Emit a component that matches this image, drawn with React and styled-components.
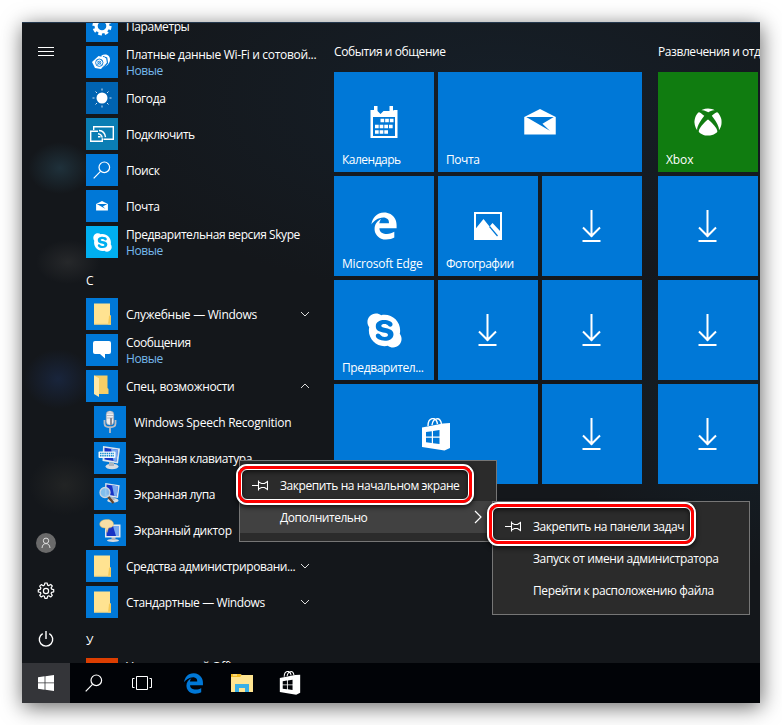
import React from 'react';
import styled, { createGlobalStyle, css } from 'styled-components';
import { FaSkype, FaXbox, FaEdgeLegacy } from 'react-icons/fa6';

const colors = {
    accent: '#0078d7',
    weather: '#0063b1',
    connect: '#0a7eb4',
    skype: '#00aff0',
    office: '#dc3e01',
    xbox: '#107c10',
    link: '#76b9ed',
    menu: '#2b2b2b',
    menuHover: '#414141',
    menuBorder: '#767676',
    marker: '#f00',
};

const GlobalStyle = createGlobalStyle`
    * {
        box-sizing: border-box;
    }

    body {
        margin: 0;
        background: #fff;
        color: #fff;
        font: 12px/16px "Open Sans", "Noto Sans", sans-serif;
        overflow: hidden;
    }

    svg {
        display: block;
        flex: none;
    }
`;

const Page = styled.div`
    height: 725px;
    padding: 22px;
`;

const Desktop = styled.div`
    position: relative;
    display: flex;
    flex-direction: column;
    width: 738px;
    height: 681px;
    background: #14181c;
    box-shadow: 1px 4px 20px rgba(0, 0, 0, 0.6);
`;

const StartMenu = styled.div`
    display: flex;
    height: 641px;
    overflow: hidden;
    border-top: 1px solid #24384e;
    background:
        radial-gradient(ellipse 32px 26px at 38px 145px, rgba(38, 66, 80, 0.6), transparent),
        radial-gradient(ellipse 32px 22px at 46px 239px, rgba(65, 65, 65, 0.4), transparent),
        radial-gradient(ellipse 34px 30px at 36px 356px, rgba(28, 46, 82, 0.6), transparent),
        radial-gradient(ellipse 36px 30px at 43px 462px, rgba(55, 55, 50, 0.4), transparent),
        radial-gradient(ellipse 200px 160px at 100% 60%, rgba(21, 38, 50, 0.6), transparent),
        radial-gradient(ellipse 420px 200px at 65% 12%, rgba(22, 32, 42, 0.9), transparent),
        #14171b;
`;

const Rail = styled.div`
    display: flex;
    flex-direction: column;
    align-items: center;
    width: 48px;
    padding: 24px 0 15px;
`;

const RailBottom = styled.div`
    display: flex;
    flex-direction: column;
    align-items: center;
    gap: 30px;
    margin-top: auto;
`;

const Avatar = styled.div`
    display: flex;
    align-items: center;
    justify-content: center;
    width: 20px;
    height: 20px;
    margin-bottom: -1px;
    border-radius: 50%;
    background: #6a6a6a;
`;

const AppList = styled.div`
    display: flex;
    flex-direction: column;
    gap: 4px;
    width: 264px;
    margin-top: -13px;
    padding-left: 16px;
`;

const AppRow = styled.div`
    display: flex;
    flex: none;
    align-items: center;
    width: 232px;
    height: 32px;
    margin-left: ${props => (props.$nested ? 8 : 0)}px;
`;

const AppIcon = styled.div`
    display: flex;
    flex: none;
    align-items: center;
    justify-content: center;
    width: 32px;
    height: 32px;
    margin-right: 8px;
    background: ${props => props.$color || colors.accent};
`;

const AppText = styled.div`
    padding-top: 1px;
    white-space: nowrap;
`;

const Text = styled.div`
    letter-spacing: ${props => props.$track || -0.42}px;
    white-space: nowrap;
`;

const NewLabel = styled(Text)`
    color: ${colors.link};
`;

const Letter = styled.div`
    flex: none;
    height: 32px;
    padding-top: 11px;
`;

const ChevronBox = styled.div`
    margin-left: auto;
    padding-right: 8px;
`;

const Groups = styled.div`
    display: flex;
    gap: 16px;
    width: 426px;
    overflow: hidden;
`;

const Group = styled.div`
    flex: none;
    padding-top: 21px;
`;

const GroupTitle = styled(Text)`
    height: 28px;
`;

const Tiles = styled.div`
    display: grid;
    grid-template-columns: repeat(${props => props.$columns}, 100px);
    grid-auto-rows: 100px;
    gap: 4px;
`;

const TileBox = styled.div`
    display: flex;
    flex-direction: column;
    align-items: center;
    height: 100px;
    background: ${props => props.$color || colors.accent};
    ${props => props.$wide && css`
        grid-column: span 2;
    `}
`;

const TileArt = styled.div`
    display: flex;
    flex: 1;
    align-items: center;
    padding-top: 20px;
`;

const TileLabel = styled(Text)`
    align-self: stretch;
    height: 20px;
    padding-left: 8px;
`;

const TaskBar = styled.div`
    display: flex;
    height: 40px;
    background: #010307;
`;

const TaskButton = styled.div`
    display: flex;
    align-items: center;
    justify-content: center;
    width: ${props => props.$width || 48}px;
    background: ${props => (props.$active ? '#343539' : 'transparent')};
`;

const Menu = styled.div`
    position: absolute;
    left: ${props => props.$left}px;
    top: ${props => props.$top}px;
    width: 258px;
    padding: 8px 0;
    border: 1px solid ${colors.menuBorder};
    background: ${colors.menu};
`;

const MenuItem = styled.div`
    display: flex;
    align-items: center;
    height: 32px;
    padding-right: 14px;
    background: ${props => (props.$hover ? colors.menuHover : 'transparent')};
`;

const MenuIcon = styled.div`
    width: 40px;
    padding-left: 12px;
`;

const MenuText = styled(Text)`
    padding-top: 2px;
`;

const MenuArrow = styled.div`
    margin-left: auto;
`;

const Marker = styled.div`
    position: absolute;
    left: ${props => props.$left}px;
    top: ${props => props.$top}px;
    width: ${props => props.$width}px;
    height: ${props => props.$height}px;
    border: 2px solid #fff;
    border-radius: 11px;
    box-shadow: 0 2px 5px rgba(0, 0, 0, 0.7);

    &::before {
        content: '';
        position: absolute;
        inset: 0;
        border: 3px solid ${colors.marker};
        border-radius: 9px;
    }

    &::after {
        content: '';
        position: absolute;
        inset: 3px;
        border: 1px solid #fff;
        border-radius: 6px;
        box-shadow: inset 0 2px 4px rgba(0, 0, 0, 0.6);
    }
`;

const HamburgerIcon = () => (
    <svg width="16" height="10" stroke="#fff">
        <path d="M0 .5h16M0 4.5h16M0 8.5h16" />
    </svg>
);

const GearIcon = () => (
    <svg width="28" height="28" viewBox="0 0 28 28" fill="none" stroke="#fff">
        <circle cx="14" cy="14" r="7.8" strokeWidth="3.6" strokeDasharray="3.5 2.626" />
        <circle cx="14" cy="14" r="5.9" strokeWidth="3.2" />
    </svg>
);

const CogIcon = () => (
    <svg width="18" height="18" viewBox="0 0 18 18" fill="none" stroke="#fff" strokeWidth="1.2" strokeLinejoin="round">
        <path d="M7.4 3.1 7.9 1h2.2l.5 2.1 1.2.5 1.9-1.2 1.6 1.6-1.2 1.9.5 1.2 2.1.5v2.2l-2.1.5-.5 1.2 1.2 1.9-1.6 1.6-1.9-1.2-1.2.5-.5 2.1H7.9l-.5-2.1-1.2-.5-1.9 1.2-1.6-1.6 1.2-1.9-.5-1.2L1.3 10V7.8l2.1-.5.5-1.2-1.2-1.9 1.6-1.6 1.9 1.2z" />
        <circle cx="9" cy="9" r="2.6" />
    </svg>
);

const PowerIcon = () => (
    <svg width="18" height="18" viewBox="0 0 18 18" fill="none" stroke="#fff" strokeWidth="1.4">
        <path d="M5.7 3.6a6.7 6.7 0 1 0 6.6 0M9 1v8" />
    </svg>
);

const UserIcon = () => (
    <svg width="10" height="12" viewBox="0 0 10 12" fill="none" stroke="#ddd">
        <circle cx="5" cy="3.8" r="2.7" />
        <path d="M1 11c.3-3 1.8-4.4 4-4.4S8.700 8 9 11" />
    </svg>
);

const DataIcon = () => (
    <svg width="20" height="16" viewBox="0 0 20 16">
        <path d="M9 2c4-3 9-1 9 3.500 0 3.500-2.500 6-7 8.500l2.500-6z" fill="#fff" />
        <path d="m11 2.500 3.700 1.500.8 5L10.500 15" fill="none" stroke={colors.accent} strokeWidth="1.200" />
        <path d="M0 8 6.500 2 13 3.500l1 5.500-5 6-6-1z" fill="#fff" />
        <circle cx="7.300" cy="8.700" r="3.700" fill="none" stroke={colors.accent} strokeWidth=".9" />
        <circle cx="7.300" cy="8.700" r="1.500" fill="none" stroke={colors.accent} strokeWidth=".8" />
        <path d="m4.800 6.200 5 5M9.800 6.200l-5 5" stroke={colors.accent} strokeWidth=".6" />
    </svg>
);

const SunIcon = () => (
    <svg width="20" height="20" viewBox="0 0 20 20" stroke="#cfe2f3">
        <circle cx="10" cy="10" r="5.500" fill="#fff" stroke="none" />
        <path d="M10 .5v2M10 17.500v2M.5 10h2M17.500 10h2M3.500 3.500l1.500 1.500M15 15l1.500 1.500M3.500 16.500 5 15M15 5l1.500-1.500" />
    </svg>
);

const ConnectIcon = () => (
    <svg width="26" height="20" viewBox="0 0 26 20" fill="none" stroke="#fff" strokeWidth="1.4">
        <path d="M4.700 6V2.700H24.300V15.300H14.500M9 7.300H1.700v10h11.600v-3" />
        <path d="M9 12.700h2.500M9 9.700c2.500.3 3.800 1.500 4.200 4M10 6.500c3.500.2 6 2.500 6.500 6.700" />
    </svg>
);

const SearchIcon = () => (
    <svg width="18" height="18" viewBox="0 0 18 18" fill="none" stroke="#fff" strokeWidth="1.2">
        <circle cx="11.300" cy="6.300" r="5.300" />
        <path d="M7.500 10.300.7 17.300" />
    </svg>
);

const MailIcon = ({ width = 32 }) => (
    <svg width={width} height={width * 0.8} viewBox="0 0 32 26">
        <path d="M0 8 16 0l16 8v18H0z" fill="#fff" />
        <path d="M2 8h28L18.500 15l7.500 7z" fill={colors.accent} />
    </svg>
);

const FolderIcon = () => (
    <svg width="18" height="22" viewBox="0 0 18 22">
        <path d="M1 .5h16V12l1 1v8.500H1z" fill="#ffe391" />
        <path d="M16 13.500 17 12l1 1.500v8h-3z" fill="#f5c957" />
        <path d="M1 20.500h17v1H1z" fill="#f7d680" />
    </svg>
);

const OpenFolderIcon = () => (
    <svg width="18" height="22" viewBox="0 0 18 22">
        <path d="M1 .5h13.500V13l1 1v5H1z" fill="#f6ce67" />
        <path d="m1 .5 5 2.800V22l-5-3z" fill="#ffe9a6" />
    </svg>
);

const MessageIcon = () => (
    <svg width="20" height="20" viewBox="0 0 20 20" fill="#fff">
        <path d="M3 1h14a2 2 0 0 1 2 2v9a2 2 0 0 1-2 2h-4v4.500L8 14H3a2 2 0 0 1-2-2V3a2 2 0 0 1 2-2z" />
    </svg>
);

const MicIcon = () => (
    <svg width="16" height="24" viewBox="0 0 16 24">
        <path d="M2.500 10v3.500c0 5 11 5 11 0V10M8 17.500V23" fill="none" stroke="#b9bcc3" strokeWidth="1.800" />
        <rect x="4.200" y="1" width="7.600" height="14" rx="3.500" fill="#eceef2" stroke="#8c8f98" strokeWidth=".5" />
        <path d="M4.500 5.500h7M4.500 8h7M4.500 3h7" stroke="#a9acb5" strokeWidth=".8" />
        <path d="M9 8v7" stroke="#888b96" strokeWidth="2" />
    </svg>
);

const Monitor = () => (
    <g>
        <ellipse cx="14" cy="20.500" rx="6.500" ry="2.800" fill="#d8dce0" />
        <path d="m11 16 5 1v3h-5z" fill="#aeb5bd" />
        <path d="m5 0 17 2.500-2 15L4.500 15z" fill="#dce6ee" />
        <path d="m6.500 1.700 13.500 2-1.500 11.800-12-2z" fill="#1733c4" />
        <path d="m13 2.700 7 1-1.500 11.800-3-.5z" fill="#79a9f0" />
    </g>
);

const KeyboardAppIcon = () => (
    <svg width="24" height="24" viewBox="0 0 24 24">
        <Monitor />
        <rect x=".5" y="5.500" width="17" height="6.500" rx="1" fill="#f4f9fc" />
        <path d="M2 7.500h14M2 9.800h14" stroke="#178ccf" strokeWidth="1.400" strokeDasharray="1.500 .7" />
    </svg>
);

const MagnifierAppIcon = () => (
    <svg width="24" height="24" viewBox="0 0 24 24">
        <g transform="translate(3 1) scale(.85)">
            <Monitor />
        </g>
        <path d="m9.500 14 6 7" stroke="#63452e" strokeWidth="2.400" />
        <circle cx="7" cy="10.500" r="5" fill="#8fc5ee" fillOpacity=".9" stroke="#cfd7df" strokeWidth="1.300" />
    </svg>
);

const NarratorAppIcon = () => (
    <svg width="24" height="24" viewBox="0 0 24 24">
        <ellipse cx="15" cy="22.500" rx="6" ry="1.500" fill="#d8dce0" />
        <path d="M13.500 19h4v3h-4z" fill="#aeb5bd" />
        <path d="M7 6.500h15.500v13H7z" fill="#e3e9ee" />
        <path d="M8.500 8H21v10H8.500z" fill="#1733c4" />
        <path d="M15 8h6v10h-3z" fill="#79a9f0" />
        <path d="M8 1.500c9-1 10 8.500 2.500 8.500L9 14.500 7.500 10C-.5 10 0 2 8 1.500z" fill="#f7dfa6" stroke="#d2b46c" strokeWidth=".5" />
    </svg>
);

const Chevron = ({ up }) => (
    <svg width="10" height="6" viewBox="0 0 10 6" fill="none" stroke="#ddd">
        <path d={up ? 'm1 5 4-4 4 4' : 'm1 1 4 4 4-4'} />
    </svg>
);

const CalendarIcon = () => (
    <svg width="28" height="32" viewBox="0 0 28 32">
        <path d="M.5 4H4V0h3.500v5l3 3 3-3h6V0H23v4.500l1.500-.5h3V32H.5z" fill="#fff" />
        <path d="M3 11h22v19H3z" fill={colors.accent} />
        <path d="M10.500 14.500h13M5 20.500h18.500M5 26h13.500" stroke="#fff" strokeWidth="3.600" strokeDasharray="3.700 .95" />
    </svg>
);

const PhotosIcon = () => (
    <svg width="28" height="28" viewBox="0 0 28 28">
        <path d="M1 1h26v26H1z" fill="none" stroke="#fff" strokeWidth="2" />
        <path d="m1 17.500 8.500-10.500 6 7.500 3-3.500L27 20v7H1z" fill="#fff" />
        <path d="m15.500 14.500 8 9.500" stroke={colors.accent} strokeWidth="1.200" />
    </svg>
);

const DownloadIcon = () => (
    <svg width="20" height="34" viewBox="0 0 20 34" fill="none" stroke="#fff" strokeWidth="2">
        <path d="M9.500 1v27M1 18.500l8.500 8.500 8.500-8.500M.5 32h18" />
    </svg>
);

const StoreIcon = ({ cutout = colors.accent, width = 28, height = 33 }) => (
    <svg width={width} height={height} viewBox="0 0 28 33">
        <path d="M6 8C6-1 14-2 15.500 6M10 7c1-7 8-9 9.500-1" fill="none" stroke="#fff" strokeWidth="1.400" />
        <path d="m0 9.500 21-4 7-.5v25l-5.500 2.500L0 29z" fill="#fff" />
        <path d="m4 14 5.800-.8v5.300H4zM11 13l6.500-1v6.500H11zM4 19.700h5.800V25L4 24.300zM11 19.700h6.500V26L11 25.200z" fill={cutout} />
    </svg>
);

const WindowsIcon = () => (
    <svg width="16" height="16" viewBox="0 0 16 16" fill="#fff">
        <path d="m0 2.200 6.600-.9v6.200H0zM7.400 1.200 16 0v7.500H7.400zM0 8.300h6.600v6.400L0 13.800zM7.400 8.300H16V16l-8.600-1.200z" />
    </svg>
);

const TaskViewIcon = () => (
    <svg width="20" height="14" viewBox="0 0 20 14" fill="none" stroke="#fff">
        <path d="M4.500.5h11v13h-11zM2.500 2.500h-2v9h2M17.500 2.500h2v9h-2" />
    </svg>
);

const ExplorerIcon = () => (
    <svg width="22" height="18" viewBox="0 0 22 18">
        <path d="M0 0h9l2 1h11v17H0z" fill="#ffe591" />
        <path d="M0 0h9l1.500 1.500L9 3H0z" fill="#f4bd24" />
        <path d="M2 1h4" stroke="#fff3c8" />
        <path d="M4 18v-8h14v8h-4v-4H8v4z" fill="#38b0e6" />
    </svg>
);

const PinIcon = () => (
    <svg width="16" height="11" viewBox="0 0 16 11" fill="none" stroke="#fff" strokeWidth="1.100">
        <path d="M0 5.500h6M6.500.5v10M6.500 2l3 1.500h3l3-2v8l-3-2h-3l-3 1.500" />
    </svg>
);

const MenuChevron = () => (
    <svg width="8" height="14" viewBox="0 0 8 14" fill="none" stroke="#fff" strokeWidth="1.200">
        <path d="m1 1 6 6-6 6" />
    </svg>
);

const apps = [
    { name: 'Параметры', icon: <GearIcon /> },
    { name: 'Платные данные Wi-Fi и сотовой...', icon: <DataIcon />, isNew: true, track: -0.31 },
    { name: 'Погода', icon: <SunIcon />, color: colors.weather },
    { name: 'Подключить', icon: <ConnectIcon />, color: colors.connect, track: -0.48 },
    { name: 'Поиск', icon: <SearchIcon /> },
    { name: 'Почта', icon: <MailIcon width={12} /> },
    { name: 'Предварительная версия Skype', icon: <FaSkype size={21} />, color: colors.skype, isNew: true },
    { letter: 'С' },
    { name: 'Служебные — Windows', icon: <FolderIcon />, chevron: 'down', track: -0.26 },
    { name: 'Сообщения', icon: <MessageIcon />, isNew: true },
    { name: 'Спец. возможности', icon: <OpenFolderIcon />, chevron: 'up', track: -0.34 },
    { name: 'Windows Speech Recognition', icon: <MicIcon />, nested: true, track: -0.24 },
    { name: 'Экранная клавиатура', icon: <KeyboardAppIcon />, nested: true },
    { name: 'Экранная лупа', icon: <MagnifierAppIcon />, nested: true },
    { name: 'Экранный диктор', icon: <NarratorAppIcon />, nested: true },
    { name: 'Средства администрировани...', icon: <FolderIcon />, chevron: 'down' },
    { name: 'Стандартные — Windows', icon: <FolderIcon />, chevron: 'down', track: -0.38 },
    { letter: 'У' },
    { name: 'Улучшите свой Office', color: colors.office, isNew: true },
];

const download = { icon: <DownloadIcon /> };

const groups = [
    {
        title: 'События и общение',
        columns: 3,
        tiles: [
            { label: 'Календарь', icon: <CalendarIcon />, track: -0.5 },
            { label: 'Почта', icon: <MailIcon />, wide: true },
            { label: 'Microsoft Edge', icon: <FaEdgeLegacy size={28} />, track: -0.2 },
            { label: 'Фотографии', icon: <PhotosIcon />, track: -0.5 },
            download,
            { label: 'Предварител...', icon: <FaSkype size={39} />, track: -0.38 },
            download,
            download,
            { icon: <StoreIcon />, wide: true },
            download,
        ],
    },
    {
        title: 'Развлечения и отдых',
        columns: 1,
        tiles: [
            { label: 'Xbox', icon: <FaXbox size={28} />, color: colors.xbox, track: -0.1 },
            download,
            download,
            download,
        ],
    },
];

const App = () => (
    <Page>
        <GlobalStyle />
        <Desktop>
            <StartMenu>
                <Rail>
                    <HamburgerIcon />
                    <RailBottom>
                        <Avatar><UserIcon /></Avatar>
                        <CogIcon />
                        <PowerIcon />
                    </RailBottom>
                </Rail>
                <AppList>
                    {apps.map(app => (app.letter ? (
                        <Letter key={app.letter}>{app.letter}</Letter>
                    ) : (
                        <AppRow key={app.name} $nested={app.nested}>
                            <AppIcon $color={app.color}>{app.icon}</AppIcon>
                            <AppText>
                                <Text $track={app.track}>{app.name}</Text>
                                {app.isNew && <NewLabel>Новые</NewLabel>}
                            </AppText>
                            {app.chevron && <ChevronBox><Chevron up={app.chevron === 'up'} /></ChevronBox>}
                        </AppRow>
                    )))}
                </AppList>
                <Groups>
                    {groups.map(group => (
                        <Group key={group.title}>
                            <GroupTitle>{group.title}</GroupTitle>
                            <Tiles $columns={group.columns}>
                                {group.tiles.map((tile, i) => (
                                    <TileBox key={i} $wide={tile.wide} $color={tile.color}>
                                        <TileArt>{tile.icon}</TileArt>
                                        <TileLabel $track={tile.track}>{tile.label}</TileLabel>
                                    </TileBox>
                                ))}
                            </Tiles>
                        </Group>
                    ))}
                </Groups>
            </StartMenu>
            <TaskBar>
                <TaskButton $active><WindowsIcon /></TaskButton>
                <TaskButton><SearchIcon /></TaskButton>
                <TaskButton><TaskViewIcon /></TaskButton>
                <TaskButton $width={54}><FaEdgeLegacy size={21} color={colors.accent} /></TaskButton>
                <TaskButton $width={44}><ExplorerIcon /></TaskButton>
                <TaskButton $width={52}><StoreIcon cutout="#010307" width={22} height={24} /></TaskButton>
            </TaskBar>
            <Menu $left={217} $top={438}>
                <MenuItem>
                    <MenuIcon><PinIcon /></MenuIcon>
                    <MenuText>Закрепить на начальном экране</MenuText>
                </MenuItem>
                <MenuItem $hover>
                    <MenuIcon />
                    <MenuText $track={-0.46}>Дополнительно</MenuText>
                    <MenuArrow><MenuChevron /></MenuArrow>
                </MenuItem>
            </Menu>
            <Menu $left={470} $top={479}>
                <MenuItem>
                    <MenuIcon><PinIcon /></MenuIcon>
                    <MenuText>Закрепить на панели задач</MenuText>
                </MenuItem>
                <MenuItem>
                    <MenuIcon />
                    <MenuText $track={-0.39}>Запуск от имени администратора</MenuText>
                </MenuItem>
                <MenuItem>
                    <MenuIcon />
                    <MenuText $track={-0.39}>Перейти к расположению файла</MenuText>
                </MenuItem>
            </Menu>
            <Marker $left={214} $top={442} $width={238} $height={41} />
            <Marker $left={465} $top={480} $width={209} $height={44} />
        </Desktop>
    </Page>
);

export default App;
